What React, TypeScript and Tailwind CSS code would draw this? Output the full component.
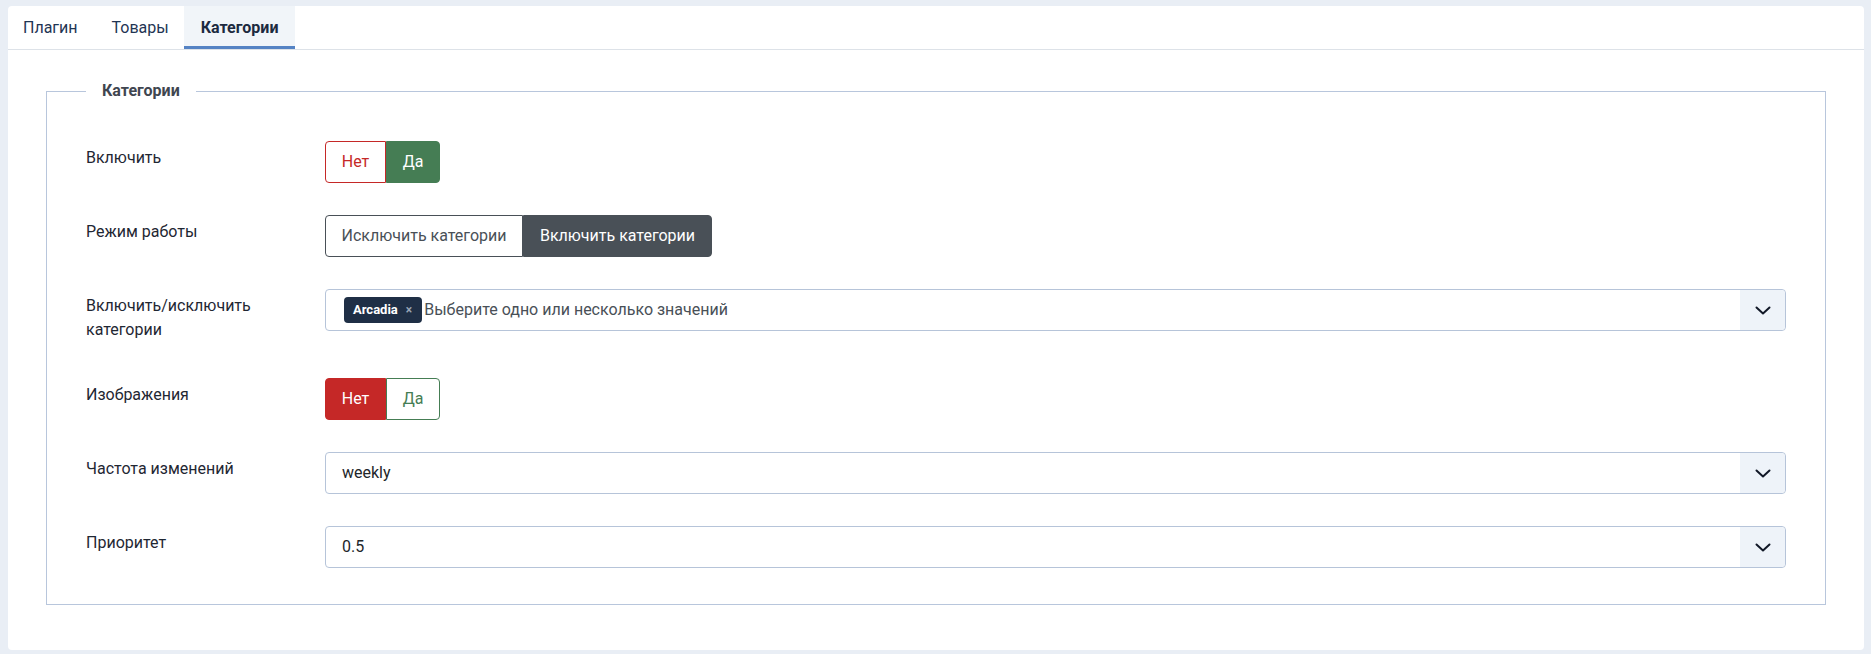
import React from 'react'

const tabs = [
  { name: 'Плагин', cls: 'pl-[15px] pr-[18px]' },
  { name: 'Товары', cls: 'pl-[16px] pr-[15px]' },
]

function Chevron() {
  return (
    <svg width="16" height="9" viewBox="0 0 16 9" fill="none">
      <polyline points="1.5,1.5 8,7.5 14.5,1.5" stroke="#111827" strokeWidth="2" strokeLinecap="round" strokeLinejoin="round" />
    </svg>
  )
}

function Row({ label, children }: { label: React.ReactNode; children: React.ReactNode }) {
  return (
    <div className="flex items-start">
      <div className="w-[239px] shrink-0 pt-[5px] pb-[4px] pr-6 text-base leading-6 text-[#1f2733]">{label}</div>
      <div className="flex-1">{children}</div>
    </div>
  )
}

function YesNo({ value }: { value: 'yes' | 'no' }) {
  const no = value === 'no'
  return (
    <div className="flex h-[42px] text-base">
      <span
        className={
          no
            ? 'flex w-[61px] items-center justify-center rounded-l-[4px] border border-[#c52827] bg-[#c52827] text-white'
            : 'flex w-[61px] items-center justify-center rounded-l-[4px] border border-[#c52827] bg-white text-[#c52827]'
        }
      >
        Нет
      </span>
      <span
        className={
          no
            ? 'flex w-[54px] items-center justify-center rounded-r-[4px] border border-[#457d54] bg-white text-[#457d54]'
            : 'flex w-[54px] items-center justify-center rounded-r-[4px] border border-[#457d54] bg-[#457d54] text-white'
        }
      >
        Да
      </span>
    </div>
  )
}

function Select({ children }: { children: React.ReactNode }) {
  return (
    <div className="flex h-[42px] items-stretch rounded-[4px] border border-[#b6c4d9] bg-white">
      <div className="flex flex-1 items-center pl-4 text-base text-[#22262a]">{children}</div>
      <div className="flex w-[45px] items-center justify-center rounded-r-[4px] bg-[#eef3f9]">
        <Chevron />
      </div>
    </div>
  )
}

export default function App() {
  return (
    <div className="min-h-screen bg-[#e9eef5] pt-[6px] pr-[7px] pb-1 pl-2 font-['Roboto',sans-serif]">
      <div className="h-[644px] rounded-[4px] bg-white">
        <div className="flex border-b border-[#dde2e8]">
          {tabs.map((t) => (
            <div
              key={t.name}
              className={`flex h-[43px] items-center border-b-[3px] border-transparent pt-[3px] text-base text-[#1f3554] ${t.cls}`}
            >
              {t.name}
            </div>
          ))}
          <div className="flex h-[43px] items-center border-b-[3px] border-[#5583c4] bg-[#f1f5f9] px-[17px] pt-[3px] text-base font-bold text-[#1c2a40]">
            Категории
          </div>
        </div>

        <fieldset className="mx-[38px] mt-[29px] border border-[#b8c6dc] px-[39px] pb-[36px]">
          <legend className="px-4 text-base leading-6 font-bold text-[#3f4650]">Категории</legend>
          <div className="flex flex-col gap-8 pt-[38px]">
            <Row label="Включить">
              <YesNo value="yes" />
            </Row>

            <Row label="Режим работы">
              <div className="flex h-[42px] text-base">
                <span className="flex w-[198px] items-center justify-center rounded-l-[4px] border border-[#495057] bg-white text-[#495057]">
                  Исключить категории
                </span>
                <span className="flex w-[189px] items-center justify-center rounded-r-[4px] border border-[#495057] bg-[#495057] text-white">
                  Включить категории
                </span>
              </div>
            </Row>

            <Row
              label={
                <>
                  Включить/исключить
                  <br />
                  категории
                </>
              }
            >
              <div className="flex h-[42px] items-stretch rounded-[4px] border border-[#b6c4d9] bg-white">
                <div className="flex flex-1 items-center pl-[18px]">
                  <span className="flex h-[26px] items-center gap-2 rounded-[4px] bg-[#1f2f46] pr-[10px] pl-[9px] text-[13px] font-bold text-white">
                    Arcadia
                    <span className="text-[12px] font-bold text-[#9aa5b4]">×</span>
                  </span>
                  <span className="ml-[2px] text-base text-[#495057]">Выберите одно или несколько значений</span>
                </div>
                <div className="flex w-[45px] items-center justify-center rounded-r-[4px] bg-[#eef3f9]">
                  <Chevron />
                </div>
              </div>
            </Row>

            <Row label="Изображения">
              <YesNo value="no" />
            </Row>

            <Row label="Частота изменений">
              <Select>weekly</Select>
            </Row>

            <Row label="Приоритет">
              <Select>0.5</Select>
            </Row>
          </div>
        </fieldset>
      </div>
    </div>
  )
}
